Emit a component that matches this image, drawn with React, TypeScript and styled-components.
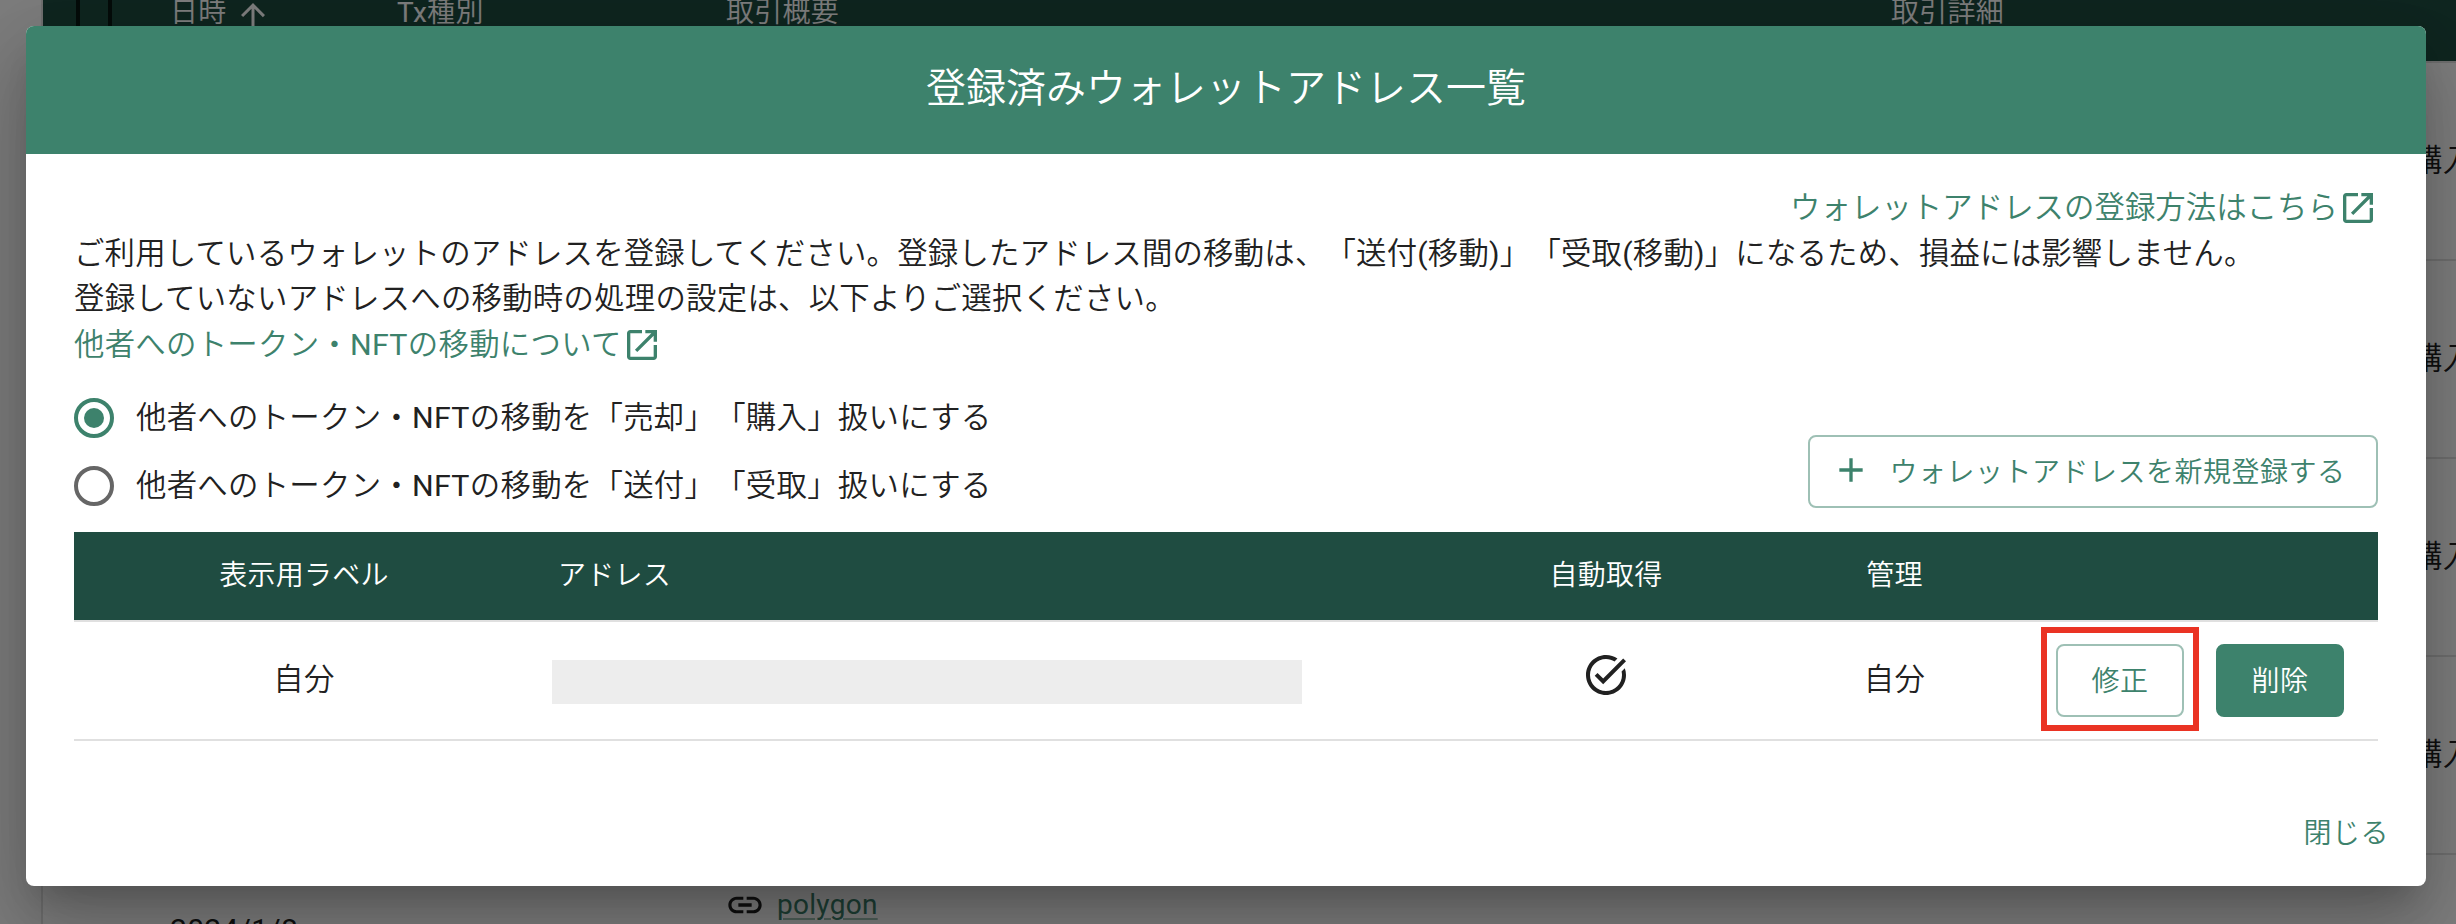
import React from "react";
import styled, { createGlobalStyle } from "styled-components";

const GREEN = "#3d826c";
const DARK_GREEN = "#1f4c41";
const INK = "#212121";

const GlobalStyle = createGlobalStyle`
  * { box-sizing: border-box; }
  body {
    margin: 0;
    font-family: Roboto, "Noto Sans CJK JP DemiLight", "Noto Sans CJK JP Light", "Noto Sans CJK JP", sans-serif;
    font-size: 30.4px;
    line-height: 45.6px;
    letter-spacing: 0.28px;
    color: ${INK};
    text-spacing-trim: space-all;
  }
`;

const Page = styled.div`
  position: relative;
  height: 924px;
  overflow: hidden;
  background: #fafafa;
`;

const HistoryTable = styled.div`
  margin: -37px 0 0 41px;
  border-left: 2px solid #e0e0e0;
  background: #fff;
`;

const historyColumns = "127px 227px 329px 1165px 522px 200px";

const HistoryHead = styled.div`
  display: grid;
  grid-template-columns: ${historyColumns};
  align-items: center;
  height: 98px;
  padding-top: 2px;
  background: ${DARK_GREEN};
  color: #fff;
  font-size: 28px;
  white-space: nowrap;
`;

const HeadLabel = styled.div`
  display: flex;
  align-items: center;
  gap: 8px;
`;

const SelectAll = styled.div`
  width: 36px;
  height: 64px;
  margin: 12px 0 0 33px;
  border: 4px solid #0a1815;
`;

const HistoryRow = styled.div`
  display: grid;
  grid-template-columns: ${historyColumns};
  align-items: center;
  height: 198px;
  border-top: 2px solid #e0e0e0;
  white-space: nowrap;
`;

const HistoryDate = styled.div`
  grid-column: 2;
  font-size: 30px;
`;

const ChainName = styled.div`
  grid-column: 4;
  align-self: start;
  display: flex;
  align-items: center;
  gap: 12px;
  margin: 27px 0 0 -1px;
  color: ${INK};
  font-size: 28px;
`;

const ChainLink = styled.a`
  color: ${GREEN};
  text-decoration: underline;
  text-decoration-color: #9ec0b5;
  text-decoration-thickness: 2px;
  text-underline-offset: 4px;
`;

const Kind = styled.div`
  grid-column: 6;
  margin-left: -1px;
`;

const Backdrop = styled.div`
  position: absolute;
  inset: 0;
  padding: 26px 30px 38px 26px;
  background: rgba(0, 0, 0, 0.5);
`;

const Dialog = styled.section`
  display: flex;
  flex-direction: column;
  height: 860px;
  border-radius: 8px;
  overflow: hidden;
  background: #fff;
  box-shadow: 0 22px 30px -14px rgba(0, 0, 0, 0.2),
    0 48px 76px 6px rgba(0, 0, 0, 0.14), 0 18px 92px 16px rgba(0, 0, 0, 0.12);
`;

const DialogTitle = styled.h2`
  display: flex;
  align-items: center;
  justify-content: center;
  height: 128px;
  margin: 0;
  padding-bottom: 2px;
  background: ${GREEN};
  color: #fff;
  font-size: 40px;
  font-weight: 400;
  letter-spacing: 0;
`;

const DialogBody = styled.div`
  flex: 1;
  padding: 31px 48px 0;
`;

const HelpLine = styled.div<{ $end?: boolean }>`
  display: flex;
  justify-content: ${(p) => (p.$end ? "flex-end" : "flex-start")};
  height: 45.6px;
  letter-spacing: ${(p) => (p.$end ? "0.05px" : "0.28px")};
`;

const HelpLink = styled.a`
  display: inline-flex;
  align-items: center;
  color: ${GREEN};
`;

const Lead = styled.p<{ $tight?: boolean }>`
  margin: 0;
  white-space: nowrap;
  letter-spacing: ${(p) => (p.$tight ? "0.2px" : "0.26px")};
`;

const Controls = styled.div`
  display: flex;
  justify-content: space-between;
  align-items: flex-end;
  margin: 17px 0 24px;
`;

const RadioGroup = styled.div`
  display: flex;
  flex-direction: column;
  margin-bottom: -12px;
`;

const RadioOption = styled.label`
  display: flex;
  align-items: center;
  gap: 22px;
  height: 68px;
`;

const RadioText = styled.span`
  margin-top: -2px;
`;

const RadioMark = styled.span<{ $on?: boolean }>`
  display: flex;
  align-items: center;
  justify-content: center;
  width: 40px;
  height: 40px;
  border: 4px solid ${(p) => (p.$on ? GREEN : "#666")};
  border-radius: 50%;

  &::after {
    content: "";
    width: 20px;
    height: 20px;
    border-radius: 50%;
    background: ${(p) => (p.$on ? GREEN : "transparent")};
  }
`;

const Button = styled.button<{ $filled?: boolean; $width: number }>`
  display: flex;
  align-items: center;
  justify-content: center;
  gap: 18px;
  width: ${(p) => p.$width}px;
  height: 73px;
  padding: 0 0 3px;
  border: 2px solid ${(p) => (p.$filled ? GREEN : "#9ec0b5")};
  border-radius: 8px;
  background: ${(p) => (p.$filled ? GREEN : "#fff")};
  color: ${(p) => (p.$filled ? "#fff" : GREEN)};
  font-family: inherit;
  font-size: 28px;
  letter-spacing: 0.5px;
`;

const AddButton = styled(Button)`
  padding-right: 9px;
`;

const walletColumns = "460px 942px 260px 317px 1fr";

const WalletHead = styled.div`
  display: grid;
  grid-template-columns: ${walletColumns};
  align-items: center;
  height: 90px;
  padding-bottom: 1px;
  border-bottom: 2px solid #e0e0e0;
  background: ${DARK_GREEN};
  background-clip: padding-box;
  color: #fff;
  font-size: 28px;
`;

const WalletRow = styled.div`
  display: grid;
  grid-template-columns: ${walletColumns};
  align-items: center;
  height: 119px;
  padding-bottom: 2px;
  border-bottom: 2px solid #e0e0e0;
`;

const Cell = styled.div<{ $left?: boolean }>`
  display: flex;
  justify-content: ${(p) => (p.$left ? "flex-start" : "center")};
  padding-left: ${(p) => (p.$left ? "24px" : "0")};
`;

const IconCell = styled(Cell)`
  margin-top: -9px;
`;

const MaskedAddress = styled.div`
  width: 750px;
  height: 44px;
  margin: 4px 0 0 18px;
  background: #ededed;
`;

const Actions = styled.div`
  display: flex;
  align-items: flex-start;
  gap: 17px;
  margin: -2px 0 0 -12px;
`;

const Highlight = styled.div`
  width: 158px;
  height: 104px;
  padding: 11px 9px;
  border: 6px solid #ea3323;
`;

const DeleteButton = styled(Button)`
  margin-top: 17px;
`;

const DialogFooter = styled.footer`
  display: flex;
  justify-content: flex-end;
  height: 75px;
  padding-right: 37px;
  color: ${GREEN};
  font-size: 28px;
  letter-spacing: 0.5px;
`;

const OpenInNew = () => (
  <svg width="40" height="40" viewBox="0 0 24 24" fill={GREEN}>
    <path d="M19 19H5V5h7V3H5c-1.11 0-2 .9-2 2v14c0 1.1.89 2 2 2h14c1.1 0 2-.9 2-2v-7h-2v7zM14 3v2h3.59l-9.83 9.83 1.41 1.41L19 6.41V10h2V3h-7z" />
  </svg>
);

const Plus = () => (
  <svg width="40" height="40" viewBox="0 0 24 24" fill={GREEN}>
    <path d="M19 13h-6v6h-2v-6H5v-2h6V5h2v6h6v2z" />
  </svg>
);

const TaskAlt = () => (
  <svg width="48" height="48" viewBox="0 0 24 24" fill={INK}>
    <path d="M22 5.18 10.59 16.6l-4.24-4.24 1.41-1.41 2.83 2.83 10-10L22 5.18zm-2.21 5.04c.13.57.21 1.17.21 1.78 0 4.42-3.58 8-8 8s-8-3.58-8-8 3.58-8 8-8c1.58 0 3.04.46 4.28 1.25l1.44-1.44C16.1 2.67 14.13 2 12 2 6.48 2 2 6.48 2 12s4.48 10 10 10 10-4.48 10-10c0-1.19-.22-2.33-.6-3.39l-1.61 1.61z" />
  </svg>
);

const ArrowUp = () => (
  <svg width="36" height="36" viewBox="0 0 24 24" fill="#fff">
    <path d="M4 12l1.41 1.41L11 7.83V20h2V7.83l5.58 5.59L20 12l-8-8-8 8z" />
  </svg>
);

const ChainIcon = () => (
  <svg width="40" height="40" viewBox="0 0 24 24" fill={INK}>
    <path d="M3.9 12c0-1.71 1.39-3.1 3.1-3.1h4V7H7c-2.76 0-5 2.24-5 5s2.24 5 5 5h4v-1.9H7c-1.71 0-3.1-1.39-3.1-3.1zM8 13h8v-2H8v2zm9-6h-4v1.9h4c1.71 0 3.1 1.39 3.1 3.1s-1.39 3.1-3.1 3.1h-4V17h4c2.76 0 5-2.24 5-5s-2.24-5-5-5z" />
  </svg>
);

const SortArrow = styled.span`
  display: flex;
  margin-top: 3px;
`;

const History = () => (
  <HistoryTable>
    <HistoryHead>
      <SelectAll />
      <HeadLabel>
        日時
        <SortArrow>
          <ArrowUp />
        </SortArrow>
      </HeadLabel>
      <HeadLabel>Tx種別</HeadLabel>
      <HeadLabel>取引概要</HeadLabel>
      <HeadLabel>取引詳細</HeadLabel>
    </HistoryHead>
    {[1, 2, 3, 4].map((n) => (
      <HistoryRow key={n}>
        <Kind>購入</Kind>
      </HistoryRow>
    ))}
    <HistoryRow>
      <HistoryDate>
        2024/1/8
        <br />
        &nbsp;
      </HistoryDate>
      <ChainName>
        <ChainIcon />
        <ChainLink>polygon</ChainLink>
      </ChainName>
    </HistoryRow>
  </HistoryTable>
);

export default function App() {
  return (
    <Page>
      <GlobalStyle />
      <History />
      <Backdrop>
        <Dialog>
          <DialogTitle>登録済みウォレットアドレス一覧</DialogTitle>
          <DialogBody>
            <HelpLine $end>
              <HelpLink>
                ウォレットアドレスの登録方法はこちら
                <OpenInNew />
              </HelpLink>
            </HelpLine>
            <Lead $tight>
              ご利用しているウォレットのアドレスを登録してください。登録したアドレス間の移動は、「送付(移動)」「受取(移動)」になるため、損益には影響しません。
            </Lead>
            <Lead>
              登録していないアドレスへの移動時の処理の設定は、以下よりご選択ください。
            </Lead>
            <HelpLine>
              <HelpLink>
                他者へのトークン・NFTの移動について
                <OpenInNew />
              </HelpLink>
            </HelpLine>
            <Controls>
              <RadioGroup>
                <RadioOption>
                  <RadioMark $on />
                  <RadioText>
                    他者へのトークン・NFTの移動を「売却」「購入」扱いにする
                  </RadioText>
                </RadioOption>
                <RadioOption>
                  <RadioMark />
                  <RadioText>
                    他者へのトークン・NFTの移動を「送付」「受取」扱いにする
                  </RadioText>
                </RadioOption>
              </RadioGroup>
              <AddButton $width={570}>
                <Plus />
                ウォレットアドレスを新規登録する
              </AddButton>
            </Controls>
            <WalletHead>
              <Cell>表示用ラベル</Cell>
              <Cell $left>アドレス</Cell>
              <Cell>自動取得</Cell>
              <Cell>管理</Cell>
            </WalletHead>
            <WalletRow>
              <Cell>自分</Cell>
              <MaskedAddress />
              <IconCell>
                <TaskAlt />
              </IconCell>
              <Cell>自分</Cell>
              <Actions>
                <Highlight>
                  <Button $width={128}>修正</Button>
                </Highlight>
                <DeleteButton $filled $width={128}>
                  削除
                </DeleteButton>
              </Actions>
            </WalletRow>
          </DialogBody>
          <DialogFooter>閉じる</DialogFooter>
        </Dialog>
      </Backdrop>
    </Page>
  );
}
